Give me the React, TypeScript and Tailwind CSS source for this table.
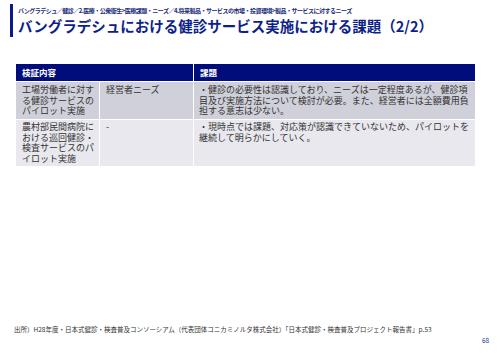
import React from "react";

const font = { fontFamily: '"Noto Sans CJK JP", "Noto Sans", sans-serif' };

export default function App() {
  return (
    <div className="relative w-[500px] h-[353px] bg-white overflow-hidden" style={font}>
      {/* header */}
      <div className="flex pt-[4px] pl-[10px]">
        <div className="w-[3px] h-[33px] bg-[#0a1a8c]" />
        <div className="flex flex-col pl-[5px]">
          <div className="text-[6px] leading-[8px] font-bold text-[#1a2a7a] mt-[3px] tracking-[-0.5px] whitespace-nowrap">
            バングラデシュ／健診／2.医療・公衆衛生&gt;医療課題・ニーズ／4.将来製品・サービスの市場・投資環境&gt;製品・サービスに対するニーズ
          </div>
          <div className="text-[14.5px] leading-[18px] font-bold text-[#0d1f8a] mt-[2px] whitespace-nowrap">
            バングラデシュにおける健診サービス実施における課題（2/2）
          </div>
        </div>
      </div>

      {/* table */}
      <div className="ml-[16px] mt-[27px] w-[459px] text-[9px] leading-[10.5px] text-[#333333]">
        <div className="flex h-[17px] bg-[#000d7a] text-white font-bold text-[8.5px] items-center">
          <div className="w-[178px] pl-[6px] border-r border-white h-full flex items-center">検証内容</div>
          <div className="flex-1 pl-[6px]">課題</div>
        </div>
        <div className="flex h-[38px] bg-[#cfd0d9] border-t border-white">
          <div className="w-[84px] pl-[6px] pt-[3px] border-r border-white">
            工場労働者に対す<br />る健診サービスの<br />パイロット実施
          </div>
          <div className="w-[94px] pl-[6px] pt-[3px] border-r border-white">経営者ニーズ</div>
          <div className="flex-1 pl-[5px] pr-[5px] pt-[3px]">
            ・健診の必要性は認識しており、ニーズは一定程度あるが、健診項<br />
            目及び実施方法について検討が必要。また、経営者には全額費用負<br />
            担する意志は少ない。
          </div>
        </div>
        <div className="flex h-[47px] bg-[#e8e8ee] border-t border-white">
          <div className="w-[84px] pl-[6px] pt-[2px] border-r border-white">
            農村部民間病院に<br />おける巡回健診・<br />検査サービスのパ<br />イロット実施
          </div>
          <div className="w-[94px] pl-[6px] pt-[2px] border-r border-white">-</div>
          <div className="flex-1 pl-[5px] pr-[5px] pt-[2px]">
            ・現時点では課題、対応策が認識できていないため、パイロットを<br />
            継続して明らかにしていく。
          </div>
        </div>
      </div>

      {/* footer */}
      <div className="absolute left-[14px] top-[325px] text-[6.5px] leading-[8px] text-[#333333] whitespace-nowrap">
        出所）H28年度・日本式健診・検査普及コンソーシアム（代表団体コニカミノルタ株式会社）「日本式健診・検査普及プロジェクト報告書」p.53
      </div>
      <div className="absolute left-[482px] top-[336px] text-[6.5px] leading-[8px] text-[#2a3a9a]">68</div>
    </div>
  );
}
